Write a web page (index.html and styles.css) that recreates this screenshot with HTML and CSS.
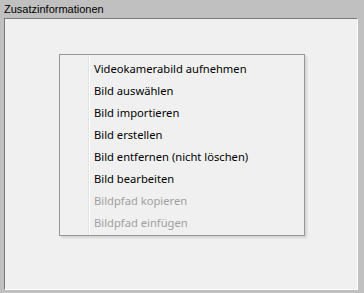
FILE: index.html
```html
<!DOCTYPE html>
<html lang="de">
<head>
    <meta charset="UTF-8">
    <title>Zusatzinformationen</title>
    <link rel="stylesheet" href="styles.css">
</head>
<body>
    <!-- Group caption -->
    <div class="caption">Zusatzinformationen</div>

    <!-- Sunken panel with context menu -->
    <div class="panel">
        <ul class="menu">
            <li class="menu-item">Videokamerabild aufnehmen</li>
            <li class="menu-item">Bild auswählen</li>
            <li class="menu-item">Bild importieren</li>
            <li class="menu-item">Bild erstellen</li>
            <li class="menu-item">Bild entfernen (nicht löschen)</li>
            <li class="menu-item">Bild bearbeiten</li>
            <li class="menu-item disabled">Bildpfad kopieren</li>
            <li class="menu-item disabled">Bildpfad einfügen</li>
        </ul>
    </div>
</body>
</html>
```

FILE: styles.css
```css
/* General Reset */
* {
    margin: 0;
    padding: 0;
    box-sizing: border-box;
}
body {
    width: 364px;
    height: 293px;
    background-color: #c0c0c0;
    font-family: "Liberation Sans", Arial, sans-serif;
    color: #000;
    display: flex;
    flex-direction: column;
    overflow: hidden;
}
/* Caption */
.caption {
    height: 18px;
    padding: 3px 0 0 4px;
    font-size: 11px;
    line-height: 12px;
}
/* Panel */
.panel {
    width: 354px;
    height: 272px;
    margin-left: 4px;
    background-color: #f0f0f0;
    border-top: 1px solid #7a7a7a;
    border-left: 1px solid #7a7a7a;
    border-right: 1px solid #fff;
    border-bottom: 1px solid #fff;
    padding: 35px 0 0 54px;
}
/* Context menu */
.menu {
    list-style: none;
    width: 246px;
    height: 182px;
    padding: 3px 2px 2px 2px;
    background-color: #f0f0f0;
    border: 1px solid #979797;
    box-shadow: 2px 2px 2px rgba(0, 0, 0, 0.12);
    background-image: linear-gradient(to right, transparent 28px, #e2e3e3 28px, #e2e3e3 29px, #fff 29px, #fff 30px, transparent 30px);
    font-family: "Noto Sans", "Open Sans", sans-serif;
    font-size: 11.2px;
}
.menu-item {
    height: 22px;
    line-height: 22px;
    padding-left: 32px;
    white-space: nowrap;
}
.menu-item.disabled {
    color: #a0a0a0;
}
```
